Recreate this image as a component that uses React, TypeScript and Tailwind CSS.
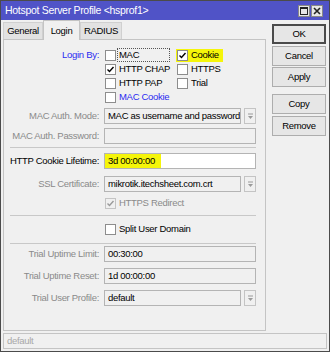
import React from "react";

const Check = ({ color = "#000" }: { color?: string }) => (
  <svg width="9" height="9" viewBox="0 0 9 9" className="block">
    <path d="M1.5 4.5 L3.5 6.5 L7.5 2" fill="none" stroke={color} strokeWidth="1.4" />
  </svg>
);

function Box({ checked, disabled }: { checked?: boolean; disabled?: boolean }) {
  return (
    <span
      className={`flex h-[11px] w-[11px] shrink-0 items-center justify-center border ${
        disabled ? "border-[#c4c4c4] bg-[#f0f0f0]" : "border-[#8d8d8d] bg-white"
      }`}
    >
      {checked && <Check color={disabled ? "#9a9a9a" : "#000"} />}
    </span>
  );
}

function DropBtn() {
  return (
    <span className="flex h-[16px] w-[12px] shrink-0 items-center justify-center border border-[#c4c4c4] bg-[#f0f0f0]">
      <svg width="7" height="7" viewBox="0 0 7 7">
        <rect x="1" y="0.5" width="5" height="1" fill="#9a9a9a" />
        <path d="M1 3 H6 L3.5 6 Z" fill="#9a9a9a" />
      </svg>
    </span>
  );
}

function Field({
  label,
  value,
  labelClass = "text-[#8a8a8a]",
  drop,
  white,
  className = "",
  children,
}: {
  label: string;
  value?: string;
  labelClass?: string;
  drop?: boolean;
  white?: boolean;
  className?: string;
  children?: React.ReactNode;
}) {
  return (
    <div className={`flex h-[16px] items-center ${className}`}>
      <span className={`w-[96px] shrink-0 whitespace-nowrap pr-[1px] text-right ${labelClass}`}>{label}:</span>
      <div className="ml-[4px] flex w-[152px] gap-[3px]">
        <div
          className={`flex h-[16px] min-w-0 flex-1 items-center overflow-hidden whitespace-nowrap border border-[#b4b4b4] ${
            white ? "bg-white" : "bg-[#f0f0f0]"
          }`}
        >
          {children ?? <span className="pl-[3px] text-black">{value}</span>}
        </div>
        {drop && <DropBtn />}
      </div>
    </div>
  );
}

function Btn({ label, def, className = "" }: { label: string; def?: boolean; className?: string }) {
  return (
    <div
      className={`flex h-[20px] items-center justify-center bg-[#e6e6e6] text-black ${
        def ? "border-2 border-[#4a4a4a]" : "border border-[#adadad]"
      } ${className}`}
    >
      {label}
    </div>
  );
}

export default function App() {
  return (
    <div className="flex h-[352px] w-[330px] flex-col border border-[#4b4b4b] bg-[#f0f0f0] font-['Liberation_Sans',Arial,sans-serif] text-[9.5px] leading-none tracking-[-0.3px] text-black">
      <div className="flex h-[19px] shrink-0 items-center justify-between bg-[#5053c7] pl-[4px] pr-[6px]">
        <span className="text-[10.5px] text-white">Hotspot Server Profile &lt;hsprof1&gt;</span>
        <div className="flex gap-[1px]">
          <span className="flex h-[12px] w-[12px] items-center justify-center border border-[#888] bg-[#e6e6e6]">
            <span className="h-[8px] w-[8px] border border-[#222] border-t-2" />
          </span>
          <span className="flex h-[12px] w-[12px] items-center justify-center border border-[#888] bg-[#e6e6e6]">
            <svg width="8" height="8" viewBox="0 0 8 8">
              <path d="M1 1 L7 7 M7 1 L1 7" stroke="#222" strokeWidth="1.6" />
            </svg>
          </span>
        </div>
      </div>

      <div className="flex flex-1">
        <div className="flex w-[265px] flex-col pl-[2px]">
          <div className="flex h-[19px] items-end">
            <div className="flex h-[17px] w-[40px] items-center justify-center border border-b-0 border-[#d0d0d0] bg-[#e2e2e2]">
              General
            </div>
            <div className="relative z-10 -mb-px flex h-[20px] w-[37px] items-center justify-center border border-b-0 border-[#c4c4c4] bg-[#f0f0f0]">
              Login
            </div>
            <div className="flex h-[17px] w-[42px] items-center justify-center border border-b-0 border-[#d0d0d0] bg-[#e2e2e2]">
              RADIUS
            </div>
          </div>
          <div className="flex h-[292px] flex-col border border-[#c4c4c4] pt-[8px]">
            <div className="flex h-[14px] items-center">
              <span className="w-[96px] shrink-0 pr-[1px] text-right text-[#2b2bf0]">Login By:</span>
              <div className="ml-[5px] flex w-[72px] items-center">
                <Box />
                <span className="ml-[1px] border border-dotted border-[#555] px-[1px] py-[1px] pr-[30px]">MAC</span>
              </div>
              <div className="-ml-[1px] flex items-center bg-[#f5f50a] py-[1px] pl-[1px] pr-[4px]">
                <Box checked />
                <span className="ml-[3px]">Cookie</span>
              </div>
            </div>
            <div className="flex h-[14px] items-center">
              <span className="w-[96px] shrink-0" />
              <div className="ml-[5px] flex w-[72px] items-center gap-[3px]">
                <Box checked />
                <span>HTTP CHAP</span>
              </div>
              <div className="flex items-center gap-[3px]">
                <Box />
                <span>HTTPS</span>
              </div>
            </div>
            <div className="flex h-[14px] items-center">
              <span className="w-[96px] shrink-0" />
              <div className="ml-[5px] flex w-[72px] items-center gap-[3px]">
                <Box />
                <span>HTTP PAP</span>
              </div>
              <div className="flex items-center gap-[3px]">
                <Box />
                <span>Trial</span>
              </div>
            </div>
            <div className="flex h-[14px] items-center">
              <span className="w-[96px] shrink-0" />
              <div className="ml-[5px] flex items-center gap-[3px]">
                <Box />
                <span className="text-[#2b2bf0]">MAC Cookie</span>
              </div>
            </div>

            <Field className="mt-[4px]" label="MAC Auth. Mode" value="MAC as username and password" drop />
            <Field className="mt-[4px]" label="MAC Auth. Password" value="" />

            <div className="ml-[6px] mt-[3px] h-px w-[246px] bg-[#c8c8c8]" />

            <Field className="mt-[5px]" label="HTTP Cookie Lifetime" labelClass="text-black" white>
              <span className="flex h-full items-center bg-[#f5f50a] pl-[3px] pr-[6px] text-black">3d 00:00:00</span>
            </Field>
            <Field className="mt-[7px]" label="SSL Certificate" value="mikrotik.itechsheet.com.crt" drop />

            <div className="mt-[4px] flex h-[14px] items-center">
              <span className="w-[96px] shrink-0" />
              <div className="ml-[5px] flex items-center gap-[3px]">
                <Box checked disabled />
                <span className="text-[#8a8a8a]">HTTPS Redirect</span>
              </div>
            </div>

            <div className="ml-[6px] mt-[5px] h-px w-[246px] bg-[#c8c8c8]" />

            <div className="mt-[6px] flex h-[14px] items-center">
              <span className="w-[96px] shrink-0" />
              <div className="ml-[5px] flex items-center gap-[3px]">
                <Box />
                <span>Split User Domain</span>
              </div>
            </div>

            <div className="ml-[6px] mt-[7px] h-px w-[246px] bg-[#c8c8c8]" />

            <Field className="mt-[2px]" label="Trial Uptime Limit" value="00:30:00" />
            <Field className="mt-[6px]" label="Trial Uptime Reset" value="1d 00:00:00" />
            <Field className="mt-[6px]" label="Trial User Profile" value="default" drop />
          </div>
        </div>

        <div className="flex flex-1 flex-col pl-[6px] pr-[3px] pt-[4px]">
          <Btn label="OK" def />
          <Btn label="Cancel" className="mt-[2px]" />
          <Btn label="Apply" className="mt-[1px]" />
          <Btn label="Copy" className="mt-[7px]" />
          <Btn label="Remove" className="mt-[2px]" />
        </div>
      </div>

      <div className="mx-[2px] mb-[2px] mt-[2px] flex h-[16px] items-center border border-[#c4c4c4] pl-[3px] text-[#a8a8a8]">
        default
      </div>
    </div>
  );
}
